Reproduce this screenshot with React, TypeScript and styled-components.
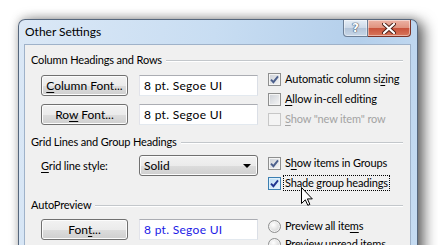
import React from "react";
import styled, { createGlobalStyle } from "styled-components";

const Global = createGlobalStyle`
  html, body { margin: 0; padding: 0; background: #ffffff; }
  body {
    width: 438px;
    height: 245px;
    overflow: hidden;
    font-family: Lato, "Noto Sans", sans-serif;
    font-size: 11px;
    letter-spacing: -0.15px;
    color: #000;
    white-space: nowrap;
  }
  * { box-sizing: border-box; }
`;

const Page = styled.div`
  padding: 19px 0 0 18px;
`;

const Window = styled.div`
  width: 400px;
  height: 240px;
  display: flex;
  flex-direction: column;
  border: 1px solid #56677d;
  border-bottom: none;
  border-radius: 7px 7px 0 0;
  padding: 0 6px 0 5px;
  background: linear-gradient(100deg, #dbe8f6 0%, #c8ddf2 45%, #b4cfeb 78%, #c6dcf2 100%);
  box-shadow: 6px 3px 14px rgba(0, 0, 0, 0.6), 0 -2px 8px rgba(0, 0, 0, 0.15);
`;

const TitleBar = styled.div`
  height: 24px;
  display: flex;
  align-items: flex-start;
`;

const Title = styled.div`
  margin: 5px 0 0 1px;
  line-height: 14px;
  font-size: 12px;
  letter-spacing: 0;
`;

const Caption = styled.div`
  margin-left: auto;
  display: flex;
`;

const CaptionButton = styled.div<{ $close?: boolean }>`
  width: ${({ $close }) => ($close ? "43px" : "25px")};
  height: 17px;
  display: flex;
  align-items: center;
  justify-content: center;
  border: 1px solid ${({ $close }) => ($close ? "#7c3226" : "#6d7f96")};
  border-top: none;
  border-left: ${({ $close }) => ($close ? "none" : "1px solid #6d7f96")};
  border-radius: ${({ $close }) => ($close ? "0 0 4px 0" : "0 0 0 4px")};
  background: ${({ $close }) =>
    $close
      ? "linear-gradient(#edb3a5 0%, #e0937f 48%, #c9533c 52%, #d8765b 100%)"
      : "linear-gradient(#e6eef7 0%, #cdd9e8 48%, #b3c4d9 52%, #c8d7e8 100%)"};
  box-shadow: inset 0 0 0 1px rgba(255, 255, 255, 0.45);
`;

const Help = styled.span`
  font-family: "DejaVu Sans", sans-serif;
  font-weight: bold;
  font-size: 12px;
  color: #fff;
  text-shadow: 0 0 1px #3a4b63, 0 0 1px #3a4b63, 0 0 1px #3a4b63;
`;

const Client = styled.div`
  flex: 1;
  background: #f0f0f0;
  border: 1px solid #9fb2c9;
  border-bottom: none;
  padding: 8px 7px 0 6px;
`;

const Group = styled.div<{ $after?: number }>`
  margin-bottom: ${({ $after }) => $after ?? 6}px;
`;

const GroupHeader = styled.div`
  display: flex;
  align-items: center;
  gap: 4px;
  height: 14px;
  line-height: 14px;
`;

const GroupLine = styled.div`
  flex: 1;
  height: 1px;
  background: #c3c7cb;
  box-shadow: 0 1px 0 #ffffff;
`;

const GroupBody = styled.div`
  display: flex;
  align-items: flex-start;
`;

const LeftGrid = styled.div<{ $top: number }>`
  margin: ${({ $top }) => $top}px 0 0 10px;
  display: grid;
  grid-template-columns: 87px 119px;
  column-gap: 11px;
  row-gap: 8px;
  align-items: center;
`;

const RightCol = styled.div<{ $top: number }>`
  margin: ${({ $top }) => $top}px 0 0 10px;
  display: flex;
  flex-direction: column;
`;

const Button = styled.div`
  height: 21px;
  display: flex;
  align-items: center;
  justify-content: center;
  font-size: 12px;
  letter-spacing: 0;
  border: 1px solid #707070;
  border-radius: 3px;
  background: linear-gradient(#f2f2f2 0%, #ebebeb 50%, #dddddd 51%, #cfcfcf 100%);
  box-shadow: inset 0 0 0 1px #fcfcfc;
`;

const Field = styled.div<{ $blue?: boolean }>`
  height: 21px;
  display: flex;
  align-items: center;
  padding: 0 4px;
  font-size: 12px;
  letter-spacing: 0.3px;
  background: #fff;
  border: 1px solid #abadb3;
  border-left-color: #e2e3ea;
  border-right-color: #dbdfe6;
  border-bottom-color: #e3e9ef;
  color: ${({ $blue }) => ($blue ? "#1a1ae6" : "#000")};
`;

const Select = styled(Button)`
  justify-content: space-between;
  padding: 0 6px 0 4px;
`;

const Arrow = styled.span`
  width: 0;
  height: 0;
  border-left: 4px solid transparent;
  border-right: 4px solid transparent;
  border-top: 4px solid #000;
`;

const Key = styled.span`
  text-decoration: underline;
  text-underline-offset: 2px;
`;

const OptionRow = styled.div<{ $h?: number }>`
  position: relative;
  height: ${({ $h }) => $h ?? 20}px;
  display: flex;
  align-items: center;
  gap: 2px;
`;

const OptionText = styled.span<{ $disabled?: boolean; $focus?: boolean }>`
  color: ${({ $disabled }) => ($disabled ? "#a3a3a3" : "#000")};
  line-height: 14px;
  padding: 0 1px;
  border: 1px ${({ $focus }) => ($focus ? "dotted #000" : "solid transparent")};
`;

const Box = styled.span<{ $hot?: boolean; $disabled?: boolean }>`
  width: 13px;
  height: 13px;
  display: flex;
  align-items: center;
  justify-content: center;
  border: 1px solid ${({ $hot, $disabled }) => ($hot ? "#3c7fb1" : $disabled ? "#c7c7c7" : "#8e8f8f")};
  background: ${({ $hot, $disabled }) =>
    $hot
      ? "linear-gradient(135deg, #b9dcf5 0%, #eaf6fd 100%)"
      : $disabled
      ? "#f4f4f4"
      : "linear-gradient(135deg, #cbcfd5 0%, #f6f6f6 100%)"};
  box-shadow: inset 0 0 0 1px ${({ $hot }) => ($hot ? "#def0fc" : "#f4f4f4")};
`;

const Radio = styled.span`
  width: 13px;
  height: 13px;
  border-radius: 50%;
  border: 1px solid #8e8f8f;
  background: radial-gradient(circle at 40% 35%, #ffffff 0%, #e6e6e6 45%, #c9cbce 100%);
  box-shadow: inset 0 0 0 1px #f4f4f4;
`;

const Cursor = styled.svg`
  position: absolute;
  left: 33px;
  top: 14px;
`;

function Check({ checked, hot, disabled }: { checked?: boolean; hot?: boolean; disabled?: boolean }) {
  return (
    <Box $hot={hot} $disabled={disabled}>
      {checked && (
        <svg width="9" height="9" viewBox="0 0 9 9">
          <path
            d="M1 4.6 L3.4 7.2 L8 1.4"
            fill="none"
            stroke={hot ? "#1f3591" : "#4b5f8c"}
            strokeWidth="1.9"
          />
        </svg>
      )}
    </Box>
  );
}

function Option({
  children,
  checked,
  hot,
  disabled,
  focus,
}: {
  children: React.ReactNode;
  checked?: boolean;
  hot?: boolean;
  disabled?: boolean;
  focus?: boolean;
}) {
  return (
    <OptionRow>
      <Check checked={checked} hot={hot} disabled={disabled} />
      <OptionText $disabled={disabled} $focus={focus}>
        {children}
      </OptionText>
      {hot && (
        <Cursor width="12" height="19" viewBox="0 0 12 19">
          <path
            d="M0.5 0.5 L0.5 16.5 L4.3 12.8 L6.8 18.3 L8.9 17.4 L6.4 11.9 L11.3 11.9 Z"
            fill="#fff"
            stroke="#000"
            strokeWidth="1"
            strokeLinejoin="miter"
          />
        </Cursor>
      )}
    </OptionRow>
  );
}

export default function App() {
  return (
    <Page>
      <Global />
      <Window>
        <TitleBar>
          <Title>Other Settings</Title>
          <Caption>
            <CaptionButton>
              <Help>?</Help>
            </CaptionButton>
            <CaptionButton $close>
              <svg width="14" height="11" viewBox="0 0 14 11">
                <path
                  d="M2 1 L12 10 M12 1 L2 10"
                  stroke="#4a1e16"
                  strokeWidth="4"
                  strokeLinecap="round"
                />
                <path
                  d="M2 1 L12 10 M12 1 L2 10"
                  stroke="#ffffff"
                  strokeWidth="2.2"
                  strokeLinecap="round"
                />
              </svg>
            </CaptionButton>
          </Caption>
        </TitleBar>
        <Client>
          <Group $after={6}>
            <GroupHeader>
              Column Headings and Rows
              <GroupLine />
            </GroupHeader>
            <GroupBody>
              <LeftGrid $top={8}>
                <Button>
                  <span>
                    <Key>C</Key>olumn Font...
                  </span>
                </Button>
                <Field>8 pt. Segoe UI</Field>
                <Button>
                  <span>
                    Ro<Key>w</Key> Font...
                  </span>
                </Button>
                <Field>8 pt. Segoe UI</Field>
              </LeftGrid>
              <RightCol $top={2}>
                <Option checked>
                  Automatic column si<Key>z</Key>ing
                </Option>
                <Option>
                  <Key>A</Key>llow in-cell editing
                </Option>
                <Option disabled>
                  <Key>S</Key>how "new item" row
                </Option>
              </RightCol>
            </GroupBody>
          </Group>
          <Group $after={5}>
            <GroupHeader>
              Grid Lines and Group Headings
              <GroupLine />
            </GroupHeader>
            <GroupBody>
              <LeftGrid $top={6}>
                <span>
                  <Key>G</Key>rid line style:
                </span>
                <Select>
                  <span>Solid</span>
                  <Arrow />
                </Select>
              </LeftGrid>
              <RightCol $top={4}>
                <Option checked>
                  S<Key>h</Key>ow items in Groups
                </Option>
                <Option checked hot focus>
                  Shade group headings
                </Option>
              </RightCol>
            </GroupBody>
          </Group>
          <Group>
            <GroupHeader>
              AutoPreview
              <GroupLine />
            </GroupHeader>
            <GroupBody>
              <LeftGrid $top={7}>
                <Button>
                  <span>
                    Fon<Key>t</Key>...
                  </span>
                </Button>
                <Field $blue>8 pt. Segoe UI</Field>
              </LeftGrid>
              <RightCol $top={5}>
                <OptionRow $h={18}>
                  <Radio />
                  <OptionText>
                    Preview all ite<Key>m</Key>s
                  </OptionText>
                </OptionRow>
                <OptionRow $h={18}>
                  <Radio />
                  <OptionText>Preview unread items</OptionText>
                </OptionRow>
              </RightCol>
            </GroupBody>
          </Group>
        </Client>
      </Window>
    </Page>
  );
}
